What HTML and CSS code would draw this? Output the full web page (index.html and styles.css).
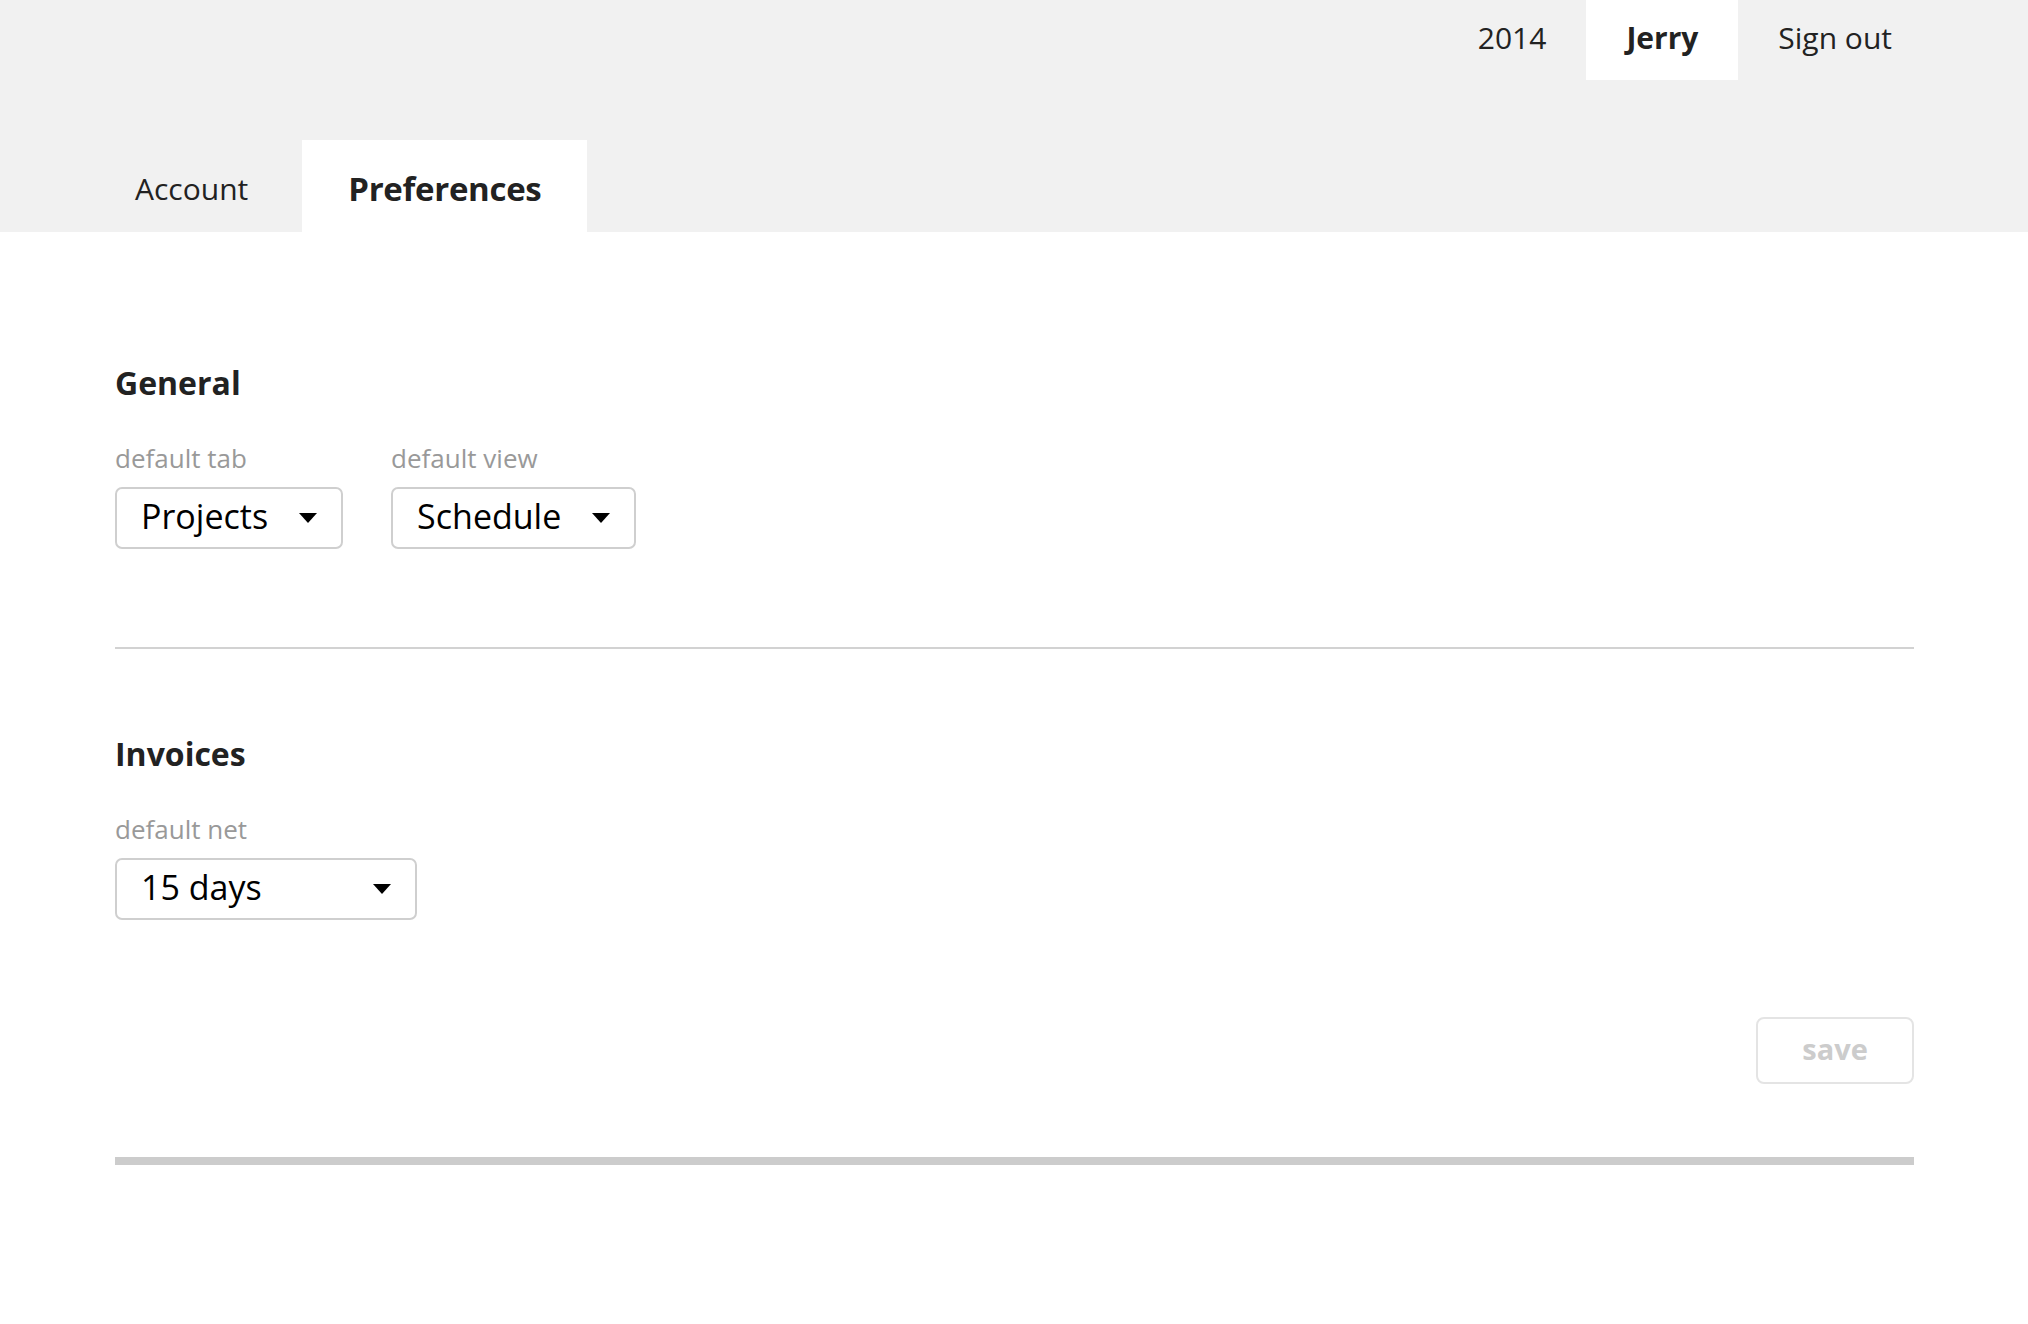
FILE: index.html
```html
<!DOCTYPE html>
<html lang="en">
<head>
<meta charset="utf-8">
<title>Preferences</title>
<link rel="stylesheet" href="styles.css">
</head>
<body>
<header class="header">
  <nav class="topnav">
    <a class="topnav-item">2014</a>
    <a class="topnav-item is-active">Jerry</a>
    <a class="topnav-item">Sign out</a>
  </nav>
  <div class="tabs">
    <a class="tab">Account</a>
    <a class="tab is-active">Preferences</a>
  </div>
</header>
<main class="content">
  <section class="section section-general">
    <h2 class="section-title">General</h2>
    <div class="fields">
      <div class="field">
        <div class="field-label">default tab</div>
        <div class="select">
          <span class="select-value">Projects</span>
          <svg class="select-arrow" width="18" height="10" viewBox="0 0 18 10"><polygon points="0,0 18,0 9,10" fill="#000"/></svg>
        </div>
      </div>
      <div class="field">
        <div class="field-label">default view</div>
        <div class="select">
          <span class="select-value">Schedule</span>
          <svg class="select-arrow" width="18" height="10" viewBox="0 0 18 10"><polygon points="0,0 18,0 9,10" fill="#000"/></svg>
        </div>
      </div>
    </div>
  </section>
  <hr class="divider">
  <section class="section section-invoices">
    <h2 class="section-title">Invoices</h2>
    <div class="fields">
      <div class="field">
        <div class="field-label">default net</div>
        <div class="select select-wide">
          <span class="select-value">15 days</span>
          <svg class="select-arrow" width="18" height="10" viewBox="0 0 18 10"><polygon points="0,0 18,0 9,10" fill="#000"/></svg>
        </div>
      </div>
    </div>
  </section>
  <div class="actions">
    <button class="save-btn" type="button">save</button>
  </div>
  <div class="bottom-bar"></div>
</main>
</body>
</html>
```

FILE: styles.css
```css
html, body {
  margin: 0;
  padding: 0;
  background: #ffffff;
}

body {
  font-family: "Open Sans", "Noto Sans", sans-serif;
  color: #222222;
}

.header {
  background: #f1f1f1;
}

.topnav {
  display: flex;
  justify-content: flex-end;
  padding-right: 96px;
  height: 80px;
}

.topnav-item {
  display: block;
  height: 80px;
  padding: 0 40px;
  font-size: 30px;
  line-height: 76px;
  color: #222222;
}

.topnav-item.is-active {
  background: #ffffff;
  font-weight: 700;
}

.tabs {
  display: flex;
  gap: 8px;
  padding-left: 89px;
  margin-top: 60px;
  height: 92px;
}

.tab {
  display: block;
  height: 86px;
  padding: 6px 46px 0;
  font-size: 30px;
  line-height: 86px;
  color: #222222;
}

.tab.is-active {
  background: #ffffff;
  font-weight: 700;
  font-size: 33px;
  letter-spacing: -0.3px;
}

.content {
  margin: 0 114px 0 115px;
}

.section-general {
  padding-top: 131px;
}

.section-invoices {
  padding-top: 85px;
}

.section-title {
  margin: 0;
  font-size: 32px;
  line-height: 40px;
  font-weight: 700;
  color: #222222;
}

.fields {
  display: flex;
  gap: 48px;
  margin-top: 38px;
}

.field-label {
  font-size: 26px;
  line-height: 34px;
  color: #999999;
}

.select {
  margin-top: 12px;
  display: flex;
  align-items: center;
  box-sizing: border-box;
  height: 62px;
  padding: 0 24px 0 24px;
  border: 2px solid #cfcfcf;
  border-radius: 7px;
  background: #ffffff;
}

.select-wide {
  width: 302px;
  justify-content: space-between;
}

.select-value {
  font-size: 34px;
  line-height: 54px;
  padding-bottom: 4px;
  color: #000000;
}

.select-arrow {
  margin-left: 31px;
  display: block;
}

.divider {
  margin: 98px 0 0;
  border: 0;
  height: 2px;
  background: #d2d2d2;
}

.actions {
  display: flex;
  justify-content: flex-end;
  margin-top: 97px;
}

.save-btn {
  box-sizing: border-box;
  width: 158px;
  height: 67px;
  border: 2px solid #e4e4e4;
  border-radius: 8px;
  background: #ffffff;
  font-family: "Open Sans", "Noto Sans", sans-serif;
  font-weight: 700;
  font-size: 29px;
  color: #cccccc;
  padding: 0 0 4px;
}

.bottom-bar {
  margin-top: 73px;
  height: 8px;
  background: #cccccc;
}
```
